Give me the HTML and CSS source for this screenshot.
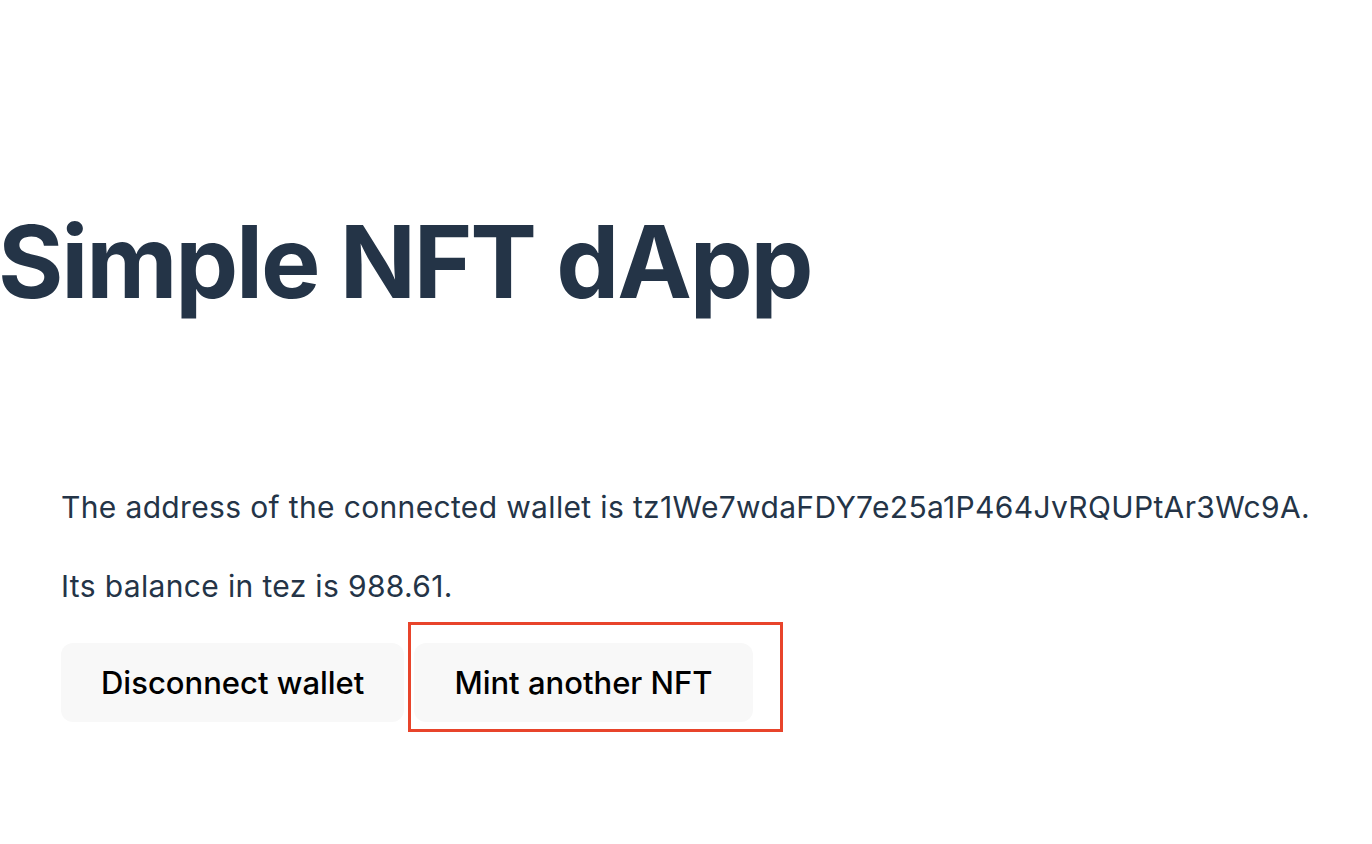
FILE: index.html
```html
<!DOCTYPE html>
<html>
<head>
<meta charset="utf-8">
<link rel="stylesheet" href="styles.css">
</head>
<body>
<main class="app">
  <h1 class="title">Simple NFT dApp</h1>
  <section class="wallet">
    <p class="line">The address of the connected wallet is tz1We7wdaFDY7e25a1P464JvRQUPtAr3Wc9A.</p>
    <p class="line">Its balance in tez is 988.61.</p>
    <div class="actions">
      <button class="btn btn-first">Disconnect wallet</button>
      <div class="highlight">
        <button class="btn">Mint another NFT</button>
      </div>
    </div>
  </section>
</main>
</body>
</html>
```
FILE: styles.css
```css
html, body {
  margin: 0;
  padding: 0;
  background: #ffffff;
}
body {
  font-family: Inter, "Noto Sans", sans-serif;
  color: #243447;
}
.app {
  padding-top: 212px;
}
.title {
  margin: 0 0 0 -2px;
  font-size: 100px;
  font-weight: 700;
  line-height: 1;
  letter-spacing: -2.2px;
  color: #243447;
}
.wallet {
  padding: 177px 0 0 61px;
}
.line {
  margin: 0 0 43px 0;
  font-size: 30px;
  line-height: 36px;
  letter-spacing: 0.35px;
}
.line:last-of-type {
  margin-bottom: 18px;
}
.actions {
  display: flex;
  align-items: flex-start;
}
.btn {
  font-family: Inter, "Noto Sans", sans-serif;
  font-size: 31px;
  font-weight: 500;
  color: #000;
  background: #f8f8f8;
  border: none;
  border-radius: 12px;
  height: 79px;
  padding: 0 40px;
}
.btn-first {
  margin-top: 21px;
}
.highlight {
  margin-left: 4px;
  border: 3px solid #e8442b;
  padding: 18px 27px 7px 3px;
}
```
